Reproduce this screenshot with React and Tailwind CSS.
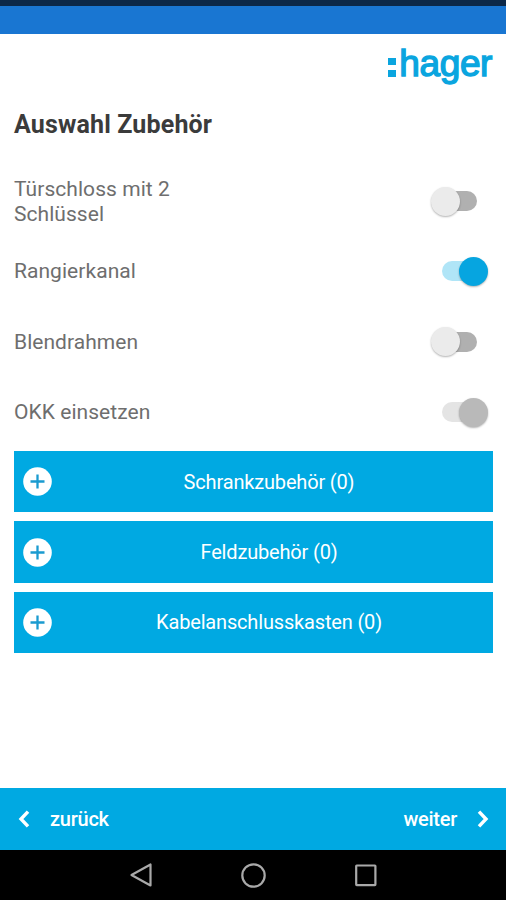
import React, { useState } from 'react';
import clsx from 'clsx';

const OPTIONS = [
    { id: 'lock', label: 'Türschloss mit 2 Schlüssel', checked: false },
    { id: 'channel', label: 'Rangierkanal', checked: true },
    { id: 'frame', label: 'Blendrahmen', checked: false },
    { id: 'okk', label: 'OKK einsetzen', checked: true, disabled: true },
];

const CATEGORIES = [
    { label: 'Schrankzubehör', count: 0 },
    { label: 'Feldzubehör', count: 0 },
    { label: 'Kabelanschlusskasten', count: 0 },
];

const Logo = () => (
    <div className="flex h-[30px] items-end text-[#0aa5df]">
        <div className="mr-[3px] flex flex-col gap-[5px] pb-px">
            <span className="h-[7px] w-[8px] bg-[#0aa5df]" />
            <span className="h-[7px] w-[8px] bg-[#0aa5df]" />
        </div>
        <span className="h-[30px] font-['Liberation_Sans',sans-serif] text-[37px] leading-[32px] tracking-[-0.4px] [-webkit-text-stroke:1.4px_#0aa5df]">
            hager
        </span>
    </div>
);

const Toggle = ({ checked, disabled, label, onChange }) => (
    <button
        role="switch"
        aria-checked={checked}
        aria-label={label}
        disabled={disabled}
        onClick={onChange}
        className={clsx('flex h-[29px] w-[57px] items-center', checked ? 'justify-end' : 'justify-start')}
    >
        <span
            className={clsx(
                'flex h-5 w-[46px] items-center rounded-full',
                checked ? 'justify-end' : 'justify-start',
                !checked && 'bg-linear-to-r from-transparent from-30% to-[#b0b0b0] to-30%',
                checked && !disabled && 'bg-linear-to-r from-[#b0e5f7] from-70% to-transparent to-70%',
                checked && disabled && 'bg-linear-to-r from-[#e4e4e4] from-70% to-transparent to-70%'
            )}
        >
            <span
                className={clsx(
                    'h-[29px] w-[29px] rounded-full shadow-[0_1px_2px_rgba(0,0,0,0.3)]',
                    !checked && 'bg-[#ebebeb]',
                    checked && (disabled ? 'bg-[#b9b9b9]' : 'bg-[#06a5e0]')
                )}
            />
        </span>
    </button>
);

const PlusIcon = () => (
    <svg width="29" height="29" viewBox="0 0 29 29">
        <circle cx="14.5" cy="14.5" r="14.3" fill="#fff" />
        <path d="M14.5 7.5v14M7.5 14.5h14" stroke="#1a9bd0" strokeWidth="2.3" />
    </svg>
);

const Chevron = ({ flip }) => (
    <svg width="12" height="18" viewBox="0 0 12 18" className={clsx(flip && 'rotate-180')}>
        <path d="M10 1.6 3 9l7 7.4" fill="none" stroke="#fff" strokeWidth="3.4" />
    </svg>
);

const SystemNav = () => (
    <div className="flex h-[50px] items-center justify-center gap-[87px] bg-black">
        <svg width="24" height="26" viewBox="0 0 24 26" fill="none" stroke="#a9a9a9" strokeWidth="2.2">
            <path d="M21.5 2.5v21L2.5 13z" strokeLinejoin="round" />
        </svg>
        <svg width="26" height="26" viewBox="0 0 26 26" fill="none" stroke="#a9a9a9" strokeWidth="2.2">
            <circle cx="13.5" cy="13.5" r="11.2" />
        </svg>
        <svg width="24" height="26" viewBox="0 0 24 26" fill="none" stroke="#a9a9a9" strokeWidth="2.2">
            <rect x="3.2" y="3.5" width="19.2" height="19.6" rx="0.5" />
        </svg>
    </div>
);

const App = () => {
    const [options, setOptions] = useState(OPTIONS);

    const toggle = (id) =>
        setOptions(options.map((o) => (o.id === id ? { ...o, checked: !o.checked } : o)));

    return (
        <div className="flex h-[900px] w-[506px] flex-col bg-white font-['Roboto',sans-serif]">
            <div className="h-[6px] bg-[#0c2848]" />
            <div className="h-7 bg-[#1976d2]" />

            <header className="flex justify-end pt-[14px] pr-[14px]">
                <Logo />
            </header>

            <main className="flex-1 pt-[28px] pr-[13px] pl-[14px]">
                <h1 className="h-[38px] text-[25px] leading-[37px] font-bold tracking-[0.15px] text-[#3b3b3b]">
                    Auswahl Zubehör
                </h1>

                <div className="mt-[22px]">
                    {options.map((o) => (
                        <div key={o.id} className="flex h-[70.3px] items-center justify-between pr-[5px]">
                            <span className="w-[190px] pt-px text-[21px] leading-[25px] tracking-[0.05px] text-[#6e6e6e]">
                                {o.label}
                            </span>
                            <Toggle
                                checked={o.checked}
                                disabled={o.disabled}
                                label={o.label}
                                onChange={() => toggle(o.id)}
                            />
                        </div>
                    ))}
                </div>

                <div className="mt-[4px] flex flex-col gap-[9px]">
                    {CATEGORIES.map((c) => (
                        <button
                            key={c.label}
                            className="flex h-[61.3px] items-center bg-[#00a9e2] pr-[7px] pl-[9px] text-white"
                        >
                            <PlusIcon />
                            <span className="flex-1 text-center text-xl tracking-[-0.17px]">
                                {c.label} ({c.count})
                            </span>
                        </button>
                    ))}
                </div>
            </main>

            <footer className="flex h-[62px] items-center justify-between bg-[#00a9e2] pr-[17px] pl-[18px] text-xl font-medium tracking-[-0.25px] text-white">
                <button className="flex items-center gap-[20px]">
                    <Chevron />
                    <span>zurück</span>
                </button>
                <button className="flex items-center gap-[20px]">
                    <span>weiter</span>
                    <Chevron flip />
                </button>
            </footer>

            <SystemNav />
        </div>
    );
};

export default App;
